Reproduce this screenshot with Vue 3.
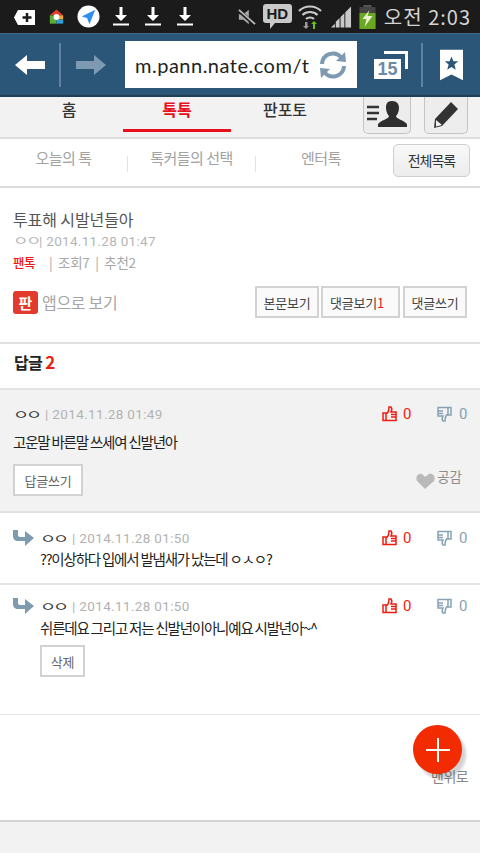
<script setup>
const statusDownloads = [0, 1, 2]
const tabs = [
  { label: '홈', on: false },
  { label: '톡톡', on: true },
  { label: '판포토', on: false },
]
const subs = ['오늘의 톡', '톡커들의 선택', '엔터톡']
const replies = [
  { date: '2014.11.28 01:50', text: '??이상하다 입에서 발냄새가 났는데 ㅇㅅㅇ?', del: false },
  { date: '2014.11.28 01:50', text: '쉬른데요 그리고 저는 신발년이아니예요 시발년아~^', del: true },
]
</script>

<template>
  <div class="page">
    <header class="status">
      <div class="status-left">
        <svg class="ic-plus" width="24" height="20" viewBox="0 0 24 20">
          <path d="M5 3h17v15H5L1 10.500z" fill="#fff" />
          <path d="M14 6v9M9.500 10.500h9" stroke="#1b1b1b" stroke-width="2.500" />
        </svg>
        <svg class="ic-home" width="15" height="16" viewBox="0 0 18 18">
          <path d="M9 0L1 7h16z" fill="#e2402c" />
          <rect x="1" y="7" width="8" height="10" fill="#5cae34" />
          <rect x="9" y="7" width="8" height="5" fill="#f0a52a" />
          <rect x="9" y="12" width="8" height="5" fill="#2b9fd8" />
          <circle cx="9" cy="9" r="3.500" fill="#fff" />
        </svg>
        <svg class="ic-nav" width="23" height="23" viewBox="0 0 24 24">
          <circle cx="12" cy="12" r="11.500" fill="#fff" />
          <path d="M19 5L5 12l5.500 1.500L13 20z" fill="#2d8df0" />
        </svg>
        <svg v-for="d in statusDownloads" :key="d" class="ic-dl" width="16" height="19" viewBox="0 0 16 19">
          <path d="M6.500 0h3v8H14l-6 6-6-6h4.500z" fill="#fff" />
          <rect y="16.500" width="16" height="2" fill="#fff" />
        </svg>
      </div>
      <div class="status-right">
        <svg class="s-mute" width="18" height="20" viewBox="0 0 20 20">
          <path d="M1 7h5l6-5v16l-6-5H1z" fill="#aaa" />
          <path d="M0 2l19 17" stroke="#1b1b1b" stroke-width="4" />
          <path d="M1 2l18 16" stroke="#bbb" stroke-width="2" />
        </svg>
        <svg class="s-hd" width="29" height="26" viewBox="0 0 29 26">
          <path d="M3 0h23a3 3 0 0 1 3 3v13a3 3 0 0 1-3 3H12l-5 6v-6H3a3 3 0 0 1-3-3V3a3 3 0 0 1 3-3z" fill="#c9c9c9" />
          <text x="3.500" y="15" class="hd">HD</text>
        </svg>
        <svg class="s-wifi" width="24" height="24" viewBox="0 0 24 24">
          <path d="M1 6c6-6 16-6 22 0M4.500 10c4-4 11-4 15 0M8 14c2-2 6-2 8 0" stroke="#c9c9c9" stroke-width="2.200" fill="none" />
          <path d="M7 17h2.500v4H11l-3 3-3-3h2z" fill="#999" />
          <path d="M16 16l3 3h-2v5h-2v-5h-2z" fill="#6cc01e" />
        </svg>
        <svg class="s-signal" width="21" height="22" viewBox="0 0 22 22">
          <path d="M0 22l4-4v4zM5 22v-6l4-4v10zM10 22V11l4-4v15zM15 22V6l6-6v22z" fill="#c9c9c9" />
        </svg>
        <svg class="s-batt" width="17" height="24" viewBox="0 0 16 24">
          <rect x="4" y="0" width="8" height="3" fill="#555" />
          <rect x="0" y="2" width="16" height="22" fill="#444" />
          <rect x="0" y="8" width="16" height="16" fill="#6aa722" />
          <path d="M10 5L3 14h4l-2 8 8-11H8z" fill="#e8f4d0" />
        </svg>
        <span class="clock">오전 2:03</span>
      </div>
    </header>

    <nav class="toolbar">
      <svg class="back" width="30" height="20" viewBox="0 0 30 20">
        <path d="M0 10L12 0v6h18v8H12v6z" fill="#fff" />
      </svg>
      <i class="tool-sep"></i>
      <svg class="forward" width="30" height="20" viewBox="0 0 30 20">
        <path d="M30 10L18 0v6H0v8h18v6z" fill="#7d9ab2" />
      </svg>
      <div class="url">
        <span class="url-text">m.pann.nate.com/t</span>
        <svg class="reload" width="28" height="28" viewBox="0 0 28 28">
          <path d="M3 13A11 11 0 0 1 22 6" stroke="#7d9ab2" stroke-width="4" fill="none" />
          <path d="M17 10l10 1-1-10z" fill="#7d9ab2" />
          <path d="M25 15A11 11 0 0 1 6 22" stroke="#7d9ab2" stroke-width="4" fill="none" />
          <path d="M11 18L1 17l1 10z" fill="#7d9ab2" />
        </svg>
      </div>
      <div class="tabs-count">
        <span class="tabs-back"></span>
        <span class="tabs-num">15</span>
      </div>
      <i class="tool-sep second"></i>
      <svg class="bookmark" width="23" height="32" viewBox="0 0 24 32">
        <path d="M0 0h24v32l-12-6-12 6z" fill="#fff" />
        <path d="M12 7l2 5h5l-4 3.500 1.500 5.500-4.500-3-4.500 3L9 15.500 5 12h5z" fill="#2c5677" />
      </svg>
    </nav>

    <section class="mainnav">
      <div class="mainnav-tabs">
        <a v-for="t in tabs" :key="t.label" class="main-tab" :class="{ on: t.on }">{{ t.label }}</a>
      </div>
      <span class="square-btn first">
        <svg width="42" height="28" viewBox="0 0 42 28">
          <path d="M1 6h12M1 12h12M1 18h10" stroke="#333" stroke-width="2.500" />
          <path d="M26 0c5 0 7 3 7 7 0 4-2 7-3 8 0 3 8 4 11 8v3H12v-3c3-4 11-5 11-8-1-1-3-4-3-8 0-4 1-7 6-7z" fill="#2e2e2e" />
        </svg>
      </span>
      <span class="square-btn">
        <svg width="26" height="28" viewBox="0 0 26 28">
          <path d="M18 1l7 7L9 25l-8 2 1-9z" fill="#333" />
          <path d="M3 19l6 5-6 1.500z" fill="#f2f2f2" />
        </svg>
      </span>
    </section>

    <section class="subnav">
      <template v-for="(s, i) in subs" :key="s">
        <a class="sub-item">{{ s }}</a>
        <i v-if="i < 2" class="sub-sep"></i>
      </template>
      <button class="all-btn">전체목록</button>
    </section>

    <article class="article">
      <h1 class="title">투표해 시발년들아</h1>
      <p class="meta"><span class="nick">ㅇㅇ</span>| 2014.11.28 01:47</p>
      <p class="stats"><b>팬톡</b><span class="stat-rest">| 조회7 | 추천2</span></p>
      <div class="article-actions">
        <div class="app-link">
          <span class="app-icon">판</span>
          <span class="app-text">앱으로 보기</span>
        </div>
        <div class="action-btns">
          <button class="box-btn w64">본문보기</button>
          <button class="box-btn w79">댓글보기<em>1</em></button>
          <button class="box-btn w64">댓글쓰기</button>
        </div>
      </div>
    </article>

    <h2 class="reply-head">답글<em>2</em></h2>

    <section class="comment best">
      <div class="comment-top">
        <span class="who">ㅇㅇ</span>
        <span class="when">| 2014.11.28 01:49</span>
        <span class="votes">
          <svg class="thumb" width="15" height="16" viewBox="0 0 15 16">
            <path d="M1 7h3v7.500H1zM4 8c2-1 3-3 3-7h2c1 1 1 3 0 5h5v8.500H4zM9 8.500h5M9 11h5" fill="none" stroke="#f01c10" stroke-width="1.500" />
          </svg>
          <span class="up">0</span>
          <svg class="thumb dn" width="15" height="16" viewBox="0 0 15 16">
            <path d="M14 9h-3V1.500h3zM11 8c-2 1-3 3-3 7H6c-1-1-1-3 0-5H1V1.500h10zM6 7.500H1M6 5H1" fill="none" stroke="#85a3b3" stroke-width="1.500" />
          </svg>
          <span class="down">0</span>
        </span>
      </div>
      <p class="body">고운말 바른말 쓰세여 신발년아</p>
      <div class="comment-foot">
        <button class="box-btn reply-btn">답글쓰기</button>
        <span class="like">
          <svg width="19" height="16" viewBox="0 0 19 16">
            <path d="M9 16L1 8C-1 4 2 0 6 1l3 3 4-3c4-1 7 3 5 7z" fill="#b9b9b9" />
          </svg>
          <span>공감</span>
        </span>
      </div>
    </section>

    <section v-for="(r, i) in replies" :key="i" class="comment sub" :class="{ tall: r.del }">
      <svg class="arrow" width="21" height="16" viewBox="0 0 21 16">
        <path d="M0 0h5v5c0 1 1 2 2 2h5V1l9 7-9 8v-5H5c-3 0-5-2-5-5z" fill="#7f9bb0" />
      </svg>
      <div class="sub-main">
        <div class="comment-top">
          <span class="who">ㅇㅇ</span>
          <span class="when">| {{ r.date }}</span>
          <span class="votes">
            <svg class="thumb" width="15" height="16" viewBox="0 0 15 16">
              <path d="M1 7h3v7.500H1zM4 8c2-1 3-3 3-7h2c1 1 1 3 0 5h5v8.500H4zM9 8.500h5M9 11h5" fill="none" stroke="#f01c10" stroke-width="1.500" />
            </svg>
            <span class="up">0</span>
            <svg class="thumb dn" width="15" height="16" viewBox="0 0 15 16">
              <path d="M14 9h-3V1.500h3zM11 8c-2 1-3 3-3 7H6c-1-1-1-3 0-5H1V1.500h10zM6 7.500H1M6 5H1" fill="none" stroke="#85a3b3" stroke-width="1.500" />
            </svg>
            <span class="down">0</span>
          </span>
        </div>
        <p class="body tight">{{ r.text }}</p>
        <button v-if="r.del" class="box-btn del-btn">삭제</button>
      </div>
    </section>

    <footer class="foot">
      <span class="top-link">맨위로</span>
      <span class="fab">
        <svg width="24" height="24" viewBox="0 0 24 24">
          <path d="M12 0v24M0 12h24" stroke="#fff" stroke-width="2" />
        </svg>
      </span>
    </footer>
    <div class="end"></div>
  </div>
</template>

<style>
html, body { margin: 0; padding: 0; background: #fff; }
</style>

<style scoped>
.page {
  position: relative;
  width: 480px;
  height: 853px;
  overflow: hidden;
  font-family: "Noto Sans CJK KR", "Liberation Sans", sans-serif;
  background: #fff;
  color: #333;
}
p, h1, h2 { margin: 0; font-weight: 400; }
em { font-style: normal; }
button { font-family: inherit; padding: 0; cursor: pointer; }

.status {
  height: 33px;
  background: #1b1b1b;
  display: flex;
  align-items: center;
  justify-content: space-between;
  box-sizing: border-box;
}
.status-left { display: flex; align-items: center; margin-left: 13px; }
.ic-plus { margin-right: 12px; }
.ic-home { margin-right: 13px; }
.ic-nav { margin-right: 13px; }
.ic-dl { margin-right: 16px; }
.status-right { display: flex; align-items: center; margin-right: 9px; }
.hd { font: 700 15px "Liberation Sans", sans-serif; fill: #1b1b1b; }
.s-hd { margin-left: 7px; }
.s-wifi { margin-left: 6px; }
.s-signal { margin-left: 9px; }
.s-batt { margin-left: 7px; }
.clock {
  margin-left: 8px;
  color: #d4d4d4;
  font-size: 20px;
  line-height: 28px;
  letter-spacing: 1px;
  white-space: nowrap;
}

.toolbar {
  height: 64px;
  box-sizing: border-box;
  background: #2c5677;
  border-top: 1px solid #3d6a8c;
  border-bottom: 2px solid #1e3f59;
  display: flex;
  align-items: center;
}
.back { margin-left: 15px; }
.tool-sep { width: 2px; height: 44px; background: #5f82a0; margin-left: 14px; }
.tool-sep.second { margin-left: 13px; }
.forward { margin-left: 15px; }
.url {
  margin-left: 19px;
  width: 232px;
  height: 47px;
  background: #fff;
  display: flex;
  align-items: center;
  justify-content: space-between;
  box-sizing: border-box;
  padding: 0 10px;
  flex: none;
}
.url-text { font: 400 20px "Lato", sans-serif; color: #222; white-space: nowrap; letter-spacing: .5px; }
.reload { flex: none; margin-left: -4px; }
.tabs-count { position: relative; width: 34px; height: 28px; margin-left: 17px; flex: none; }
.tabs-back {
  position: absolute;
  right: 0;
  top: 0;
  width: 24px;
  height: 18px;
  border-top: 3px solid #fff;
  border-right: 3px solid #fff;
  box-sizing: border-box;
}
.tabs-num {
  position: absolute;
  left: 0;
  bottom: 0;
  width: 27px;
  height: 20px;
  background: #fff;
  color: #6c8ba3;
  font: 700 18px/20px "Liberation Sans", sans-serif;
  text-align: center;
}
.bookmark { margin-left: 17px; }

.mainnav {
  height: 42px;
  box-sizing: border-box;
  background: #f2f2f2;
  border-bottom: 2px solid #dcdcdc;
  display: flex;
  align-items: flex-start;
  position: relative;
}
.mainnav-tabs { display: flex; width: 355px; }
.main-tab {
  font-size: 16px;
  line-height: 24px;
  height: 36px;
  text-align: center;
  color: #333;
  font-weight: 500;
}
.main-tab:nth-child(1) { width: 123px; text-indent: 15px; }
.main-tab:nth-child(2) { width: 108px; }
.main-tab:nth-child(3) { width: 108px; }
.main-tab.on { color: #e8101c; font-weight: 700; height: 32px; border-bottom: 3px solid #e8101c; }
.square-btn {
  height: 37px;
  box-sizing: border-box;
  width: 48px;
  border: 1px solid #c4c4c4;
  border-top: 0;
  border-radius: 0 0 5px 5px;
  background: #ededed;
  display: flex;
  align-items: center;
  justify-content: center;
  margin-left: 8px;
}
.square-btn + .square-btn { width: 44px; margin-left: 13px; }

.subnav {
  height: 49px;
  box-sizing: border-box;
  background: #fff;
  border-bottom: 2px solid #dcdcdc;
  display: flex;
  align-items: center;
  position: relative;
}
.sub-item { color: #a2a2a2; font-size: 15px; letter-spacing: -0.5px; text-align: center; margin-top: -10px; white-space: nowrap; }
.sub-item:nth-of-type(1) { width: 127px; }
.sub-item:nth-of-type(2) { width: 127px; }
.sub-item:nth-of-type(3) { width: 130px; }
.sub-sep { width: 1px; height: 16px; background: #e2e2e2; flex: none; margin-top: 2px; }
.all-btn {
  width: 77px;
  height: 33px;
  margin-left: 7px;
  border: 1px solid #cfcfcf;
  border-radius: 5px;
  background: linear-gradient(#f8f8f8, #ececec);
  color: #333;
  font-size: 14px;
  letter-spacing: -1px;
  margin-top: -5px;
}

.article {
  height: 156px;
  box-sizing: border-box;
  padding: 19px 13px 0;
  border-bottom: 2px solid #e0e0e0;
}
.title { font-size: 16px; line-height: 24px; color: #555; letter-spacing: -0.1px; }
.meta { font-size: 13.500px; line-height: 20px; color: #b5b5b5; letter-spacing: .3px; font-family: "Roboto", "Noto Sans CJK KR", sans-serif; }
.nick { display: inline-block; width: 26px; transform: scale(1.25, .85); transform-origin: left center; letter-spacing: -2px; white-space: nowrap; }
.stats { font-size: 13.500px; line-height: 20px; margin-top: 1px; color: #a8a8a8; letter-spacing: -0.3px; }
.stats b { color: #f01818; font-weight: 500; font-size: 12.500px; letter-spacing: -0.5px; }
.stat-rest { margin-left: 14px; word-spacing: 3px; }
.article-actions { display: flex; justify-content: space-between; align-items: flex-start; margin-top: 13px; }
.app-link { display: flex; align-items: center; margin-top: 4px; }
.app-icon {
  width: 25px;
  height: 23px;
  border-radius: 3px;
  background: #e23a2c;
  color: #fff;
  font-size: 15px;
  line-height: 23px;
  font-weight: 700;
  text-align: center;
}
.app-text { color: #a5a5a5; font-size: 16px; line-height: 24px; margin-left: 4px; letter-spacing: -0.3px; }
.action-btns { display: flex; gap: 2px; }
.box-btn {
  height: 32px;
  box-sizing: border-box;
  border: 2px solid #d2d2d2;
  background: #fafafa;
  color: #444;
  font-size: 13px;
  letter-spacing: -0.2px;
}
.w64 { width: 64px; }
.w79 { width: 79px; text-align: left; padding-left: 7px; }
.w79 + .w64 { margin-left: 1px; }
.box-btn em { color: #f01818; }

.reply-head {
  height: 44px;
  box-sizing: border-box;
  padding: 6px 14px 0;
  font-size: 16px;
  line-height: 24px;
  font-weight: 700;
  color: #222;
  letter-spacing: -0.6px;
}
.reply-head em { color: #f01e10; margin-left: 3px; font-size: 17px; }

.comment { box-sizing: border-box; }
.best {
  height: 125px;
  background: #f2f2f2;
  border-top: 2px solid #e4e4e4;
  border-bottom: 2px solid #e0e0e0;
  padding: 14px 13px 0;
}
.comment-top { display: flex; align-items: center; height: 20px; }
.who { display: inline-block; font-size: 14px; color: #333; width: 27px; letter-spacing: -2.500px; white-space: nowrap; transform: scale(1.25, .85); transform-origin: left center; flex: none; }
.when { font-family: "Roboto", sans-serif; font-size: 13.500px; color: #b2b2b2; letter-spacing: .35px; margin-left: 5px; white-space: nowrap; }
.votes { margin-left: auto; display: flex; align-items: center; font-size: 15px; font-family: "Roboto", sans-serif; }
.up { color: #f01c10; margin-left: 6px; width: 8px; }
.down { color: #85a3b3; margin-left: 7px; width: 8px; }
.thumb.dn { margin-left: 26px; }
.body { font-size: 14.500px; line-height: 20px; color: #222; letter-spacing: -1.200px; margin-top: 8px; white-space: nowrap; }
.body.tight { margin-top: 1px; }
.tall .body.tight { margin-top: 2px; }
.comment-foot { display: flex; justify-content: space-between; align-items: flex-start; margin-top: 12px; }
.reply-btn { width: 70px; background: #fff; color: #666; }
.like { display: flex; align-items: flex-start; color: #8c8c8c; font-size: 13.500px; line-height: 18px; margin-right: 5px; margin-top: 3px; }
.like svg { margin-top: 6px; margin-right: 2px; }

.sub {
  height: 72px;
  display: flex;
  align-items: flex-start;
  padding: 15px 13px 0;
  border-bottom: 2px solid #e4e4e4;
}
.sub.tall { height: 130px; padding-top: 11px; border-bottom: 1px solid #e4e4e4; }
.arrow { flex: none; margin-top: 2px; margin-right: 6px; }
.sub-main { flex: 1; min-width: 0; }
.del-btn { display: block; margin-top: 7px; width: 45px; background: #fff; color: #666; font-size: 13px; }

.foot { height: 107px; position: relative; border-bottom: 2px solid #d4d4d4; box-sizing: border-box; }
.top-link {
  position: absolute;
  left: 431px;
  top: 51px;
  color: #888;
  font-size: 14px;
  line-height: 20px;
  letter-spacing: -0.5px;
}
.fab {
  position: absolute;
  left: 413px;
  top: 10px;
  width: 49px;
  height: 49px;
  border-radius: 50%;
  background: #f22b00;
  box-shadow: 4px 5px 3px rgba(0, 0, 0, .18);
  display: flex;
  align-items: center;
  justify-content: center;
}
.end { height: 40px; background: #f2f2f2; }
</style>
